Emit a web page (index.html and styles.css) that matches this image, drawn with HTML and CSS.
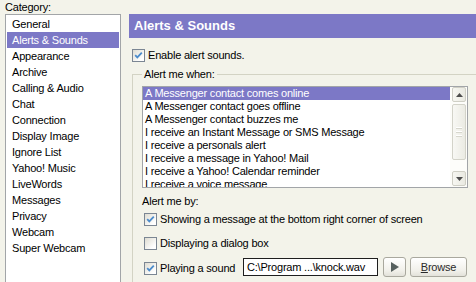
FILE: index.html
```html
<!DOCTYPE HTML>
<html>

<head>
    <meta charset="utf-8">
    <title>Preferences</title>
    <link rel="stylesheet" href="styles.css">
</head>

<body>
    <div class="dialog">
        <div class="cat-col">
            <div class="cat-label">Category:</div>
            <ul class="cat-list">
                <li>General</li>
                <li class="sel">Alerts &amp; Sounds</li>
                <li>Appearance</li>
                <li>Archive</li>
                <li>Calling &amp; Audio</li>
                <li>Chat</li>
                <li>Connection</li>
                <li>Display Image</li>
                <li>Ignore List</li>
                <li>Yahoo! Music</li>
                <li>LiveWords</li>
                <li>Messages</li>
                <li>Privacy</li>
                <li>Webcam</li>
                <li>Super Webcam</li>
            </ul>
        </div>

        <div class="pane">
            <h1 class="pane-title">Alerts &amp; Sounds</h1>

            <div class="row enable">
                <span class="cb"><svg width="11" height="11" viewBox="0 0 11 11"><path d="M2.2 5.2 L4.3 7.4 L8.8 2.6" fill="none" stroke="#4c8ccb" stroke-width="1.8"/></svg></span>
                <span class="lbl">Enable alert sounds.</span>
            </div>

            <fieldset class="grp">
                <legend>Alert me when:</legend>
                <div class="listbox">
                    <ul class="events">
                        <li class="sel">A Messenger contact comes online</li>
                        <li>A Messenger contact goes offline</li>
                        <li>A Messenger contact buzzes me</li>
                        <li>I receive an Instant Message or SMS Message</li>
                        <li>I receive a personals alert</li>
                        <li>I receive a message in Yahoo! Mail</li>
                        <li>I receive a Yahoo! Calendar reminder</li>
                        <li>I receive a voice message</li>
                    </ul>
                    <div class="sbar">
                        <div class="sb-btn"><svg width="7" height="4" viewBox="0 0 7 4"><polygon points="0,4 3.5,0 7,4" fill="#4d4d4d"/></svg></div>
                        <div class="sb-thumb">
                            <span class="grip"></span>
                            <span class="grip"></span>
                            <span class="grip"></span>
                        </div>
                        <div class="sb-track"></div>
                        <div class="sb-btn"><svg width="7" height="4" viewBox="0 0 7 4"><polygon points="0,0 7,0 3.5,4" fill="#4d4d4d"/></svg></div>
                    </div>
                </div>

                <div class="by">Alert me by:</div>

                <div class="row opt opt1">
                    <span class="cb"><svg width="11" height="11" viewBox="0 0 11 11"><path d="M2.2 5.2 L4.3 7.4 L8.8 2.6" fill="none" stroke="#4c8ccb" stroke-width="1.8"/></svg></span>
                    <span class="lbl">Showing a message at the bottom right corner of screen</span>
                </div>
                <div class="row opt opt2">
                    <span class="cb"></span>
                    <span class="lbl">Displaying a dialog box</span>
                </div>
                <div class="row opt opt3">
                    <span class="cb"><svg width="11" height="11" viewBox="0 0 11 11"><path d="M2.2 5.2 L4.3 7.4 L8.8 2.6" fill="none" stroke="#4c8ccb" stroke-width="1.8"/></svg></span>
                    <span class="lbl sound-lbl">Playing a sound</span>
                    <div class="path">C:\Program ...\knock.wav</div>
                    <button class="btn play"><svg width="8" height="10" viewBox="0 0 8 10"><polygon points="0,0 8,5 0,10" fill="#56605e"/></svg></button>
                    <button class="btn browse"><u>B</u>rowse</button>
                </div>
            </fieldset>
        </div>
    </div>
</body>

</html>
```

FILE: styles.css
```css
* {
    box-sizing: border-box;
}

html,
body {
    height: 100%;
}

body {
    margin: 0;
    background: #f3f3ea;
    font: 11px "Liberation Sans", Arial, sans-serif;
    letter-spacing: -0.2px;
    color: #000;
    overflow: hidden;
}

ul {
    list-style: none;
    margin: 0;
    padding: 0;
}

.dialog {
    display: flex;
    height: 282px;
    overflow: hidden;
}

/* category list */
.cat-col {
    width: 121px;
    flex: none;
    display: flex;
    flex-direction: column;
}

.cat-label {
    padding-left: 5px;
    line-height: 14px;
}

.cat-list {
    flex: 1;
    margin: 0 0 -2px 5px;
    padding: 1px 1px 0;
    border: 1px solid #a2a5a8;
    background: #fff;
}

.cat-list li {
    line-height: 16px;
    padding-left: 5px;
}

.cat-list li.sel,
.events li.sel {
    background: #7c78c6;
    color: #fff;
}

/* right pane */
.pane {
    flex: 1;
    margin-left: 8px;
    padding-top: 14px;
    min-width: 0;
    display: flex;
    flex-direction: column;
}

.pane-title {
    margin: 0;
    height: 24px;
    line-height: 24px;
    padding-left: 5px;
    background: #7c78c6;
    color: #fff;
    font-size: 13px;
    font-weight: bold;
    letter-spacing: 0;
}

.row {
    display: flex;
    align-items: center;
    line-height: 13px;
}

.enable {
    margin: 11px 0 0 3px;
}

.cb {
    width: 13px;
    height: 13px;
    flex: none;
    border: 1px solid #7b8693;
    background: linear-gradient(135deg, #dedcd2, #fff 80%);
}

.cb svg {
    display: block;
}

.lbl {
    margin-left: 3px;
    white-space: nowrap;
}

.grp {
    flex: 1;
    margin: 6px 0 -2px 3px;
    padding: 5px 0 0 9px;
    min-width: 0;
    border: 1px solid #d3d3c4;
    border-right: 0;
    border-bottom: 0;
}

.grp legend {
    padding: 0 2px;
    line-height: 13px;
}

/* event list box */
.listbox {
    display: flex;
    width: 326px;
    height: 102px;
    border: 1px solid #a2a5a8;
    background: #fff;
}

.events {
    flex: 1;
    overflow: hidden;
}

.events li {
    height: 13px;
    line-height: 13px;
    padding-left: 2px;
    white-space: nowrap;
}

.sbar {
    width: 17px;
    flex: none;
    display: flex;
    flex-direction: column;
    padding: 0 1px 1px 2px;
    background: #fdfdfa;
}

.sb-btn {
    height: 15px;
    display: flex;
    align-items: center;
    justify-content: center;
    border: 1px solid #cfcfc5;
    border-radius: 2px;
    background: linear-gradient(90deg, #f7f7f2, #e9e9e1);
}

.sb-thumb {
    height: 56px;
    margin-top: 2px;
    display: flex;
    flex-direction: column;
    justify-content: center;
    gap: 2px;
    padding: 0 3px;
    border: 1px solid #d3d3c9;
    border-radius: 2px;
    background: linear-gradient(90deg, #f8f8f4, #ebebe3);
}

.grip {
    height: 2px;
    border-top: 1px solid #fff;
    border-bottom: 1px solid #d6d6cc;
}

.sb-track {
    flex: 1;
}

/* alert me by */
.by {
    margin-top: 7px;
    line-height: 13px;
}

.opt {
    padding-left: 2px;
}

.opt1 {
    margin-top: 5px;
}

.opt2 {
    margin-top: 11px;
}

.opt3 {
    margin-top: 7px;
    height: 20px;
}

.opt3 .cb {
    margin-top: 3px;
}

.sound-lbl {
    width: 83px;
    margin-top: 3px;
}

.path {
    width: 135px;
    height: 18px;
    padding-left: 3px;
    line-height: 16px;
    white-space: nowrap;
    overflow: hidden;
    border: 1px solid #1e1e1e;
    background: #fff;
}

.btn {
    height: 20px;
    padding: 0;
    display: flex;
    align-items: center;
    justify-content: center;
    font: inherit;
    letter-spacing: inherit;
    color: #2a2a2a;
    border: 1px solid #a9a89e;
    border-radius: 3px;
    background: linear-gradient(#ffffff, #f1f0ea 70%, #e3e2da);
}

.play {
    width: 23px;
    margin-left: 5px;
}

.browse {
    width: 57px;
    margin-left: 4px;
}
```
